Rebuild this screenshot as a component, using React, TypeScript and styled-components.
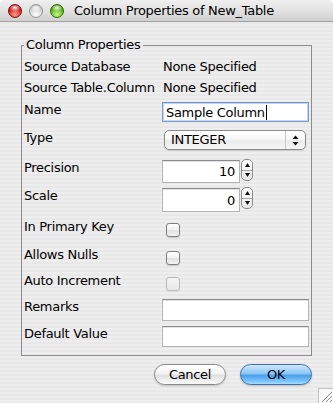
import React from "react";
import styled, { createGlobalStyle } from "styled-components";

const Global = createGlobalStyle`
  html, body { margin: 0; padding: 0; background: #ffffff; }
  body { font-family: "DejaVu Sans", "Liberation Sans", sans-serif; }
  * { box-sizing: border-box; }
`;

const Window = styled.div`
  position: relative;
  width: 333px;
  height: 403px;
  border-radius: 5px 5px 0 0;
  overflow: hidden;
  display: flex;
  flex-direction: column;
  font-size: 13px;
  letter-spacing: -0.3px;
  color: #000;
  background: repeating-linear-gradient(to bottom, #eeeeee 0 2px, #e8e8e8 2px 4px);
`;

const TitleBar = styled.div`
  height: 22px;
  flex: none;
  display: flex;
  align-items: center;
  padding-left: 8px;
  gap: 7px;
  border-bottom: 1px solid #a2a2a2;
  background: linear-gradient(to bottom, #f0f0f0 0%, #e2e2e2 50%, #d0d0d0 100%);
`;

const lightColors: Record<string, [string, string, string]> = {
  close: ["#ff9a90", "#d8302c", "#8a0c08"],
  min: ["#ffffff", "#d6d6d6", "#959595"],
  zoom: ["#c8f58e", "#68b822", "#2c6e06"],
};

const Light = styled.span<{ $kind: "close" | "min" | "zoom" }>`
  width: 14px;
  height: 14px;
  border-radius: 50%;
  flex: none;
  border: 1px solid ${(p) => lightColors[p.$kind][2]};
  background:
    radial-gradient(ellipse 45% 30% at 50% 22%, rgba(255, 255, 255, 0.95) 0%, rgba(255, 255, 255, 0) 100%),
    radial-gradient(
      circle at 50% 80%,
      ${(p) => lightColors[p.$kind][0]} 0%,
      ${(p) => lightColors[p.$kind][1]} 55%,
      ${(p) => lightColors[p.$kind][2]} 100%
    );
`;

const Title = styled.span`
  margin-left: 3px;
  font-size: 13px;
  line-height: 16px;
  white-space: nowrap;
`;

const Content = styled.div`
  flex: 1;
  display: flex;
  flex-direction: column;
  padding: 15px 21px 0 21px;
`;

const Group = styled.fieldset`
  margin: 0;
  padding: 6px 2px 8px 2px;
  border: 1px solid #8c8c8c;
  min-width: 0;
`;

const Legend = styled.legend`
  padding: 0 2px;
  margin: 0;
  line-height: 16px;
  font-size: 13px;
`;

const Row = styled.div<{ $h: number }>`
  display: grid;
  grid-template-columns: 138px 1fr;
  align-items: start;
  height: ${(p) => p.$h}px;
`;

const Label = styled.span`
  line-height: 16px;
  white-space: nowrap;
`;

const Static = styled.span`
  line-height: 16px;
  white-space: nowrap;
  padding-left: 1px;
`;

const TextBox = styled.div<{ $h: number; $focus?: boolean; $w?: number; $right?: boolean }>`
  width: ${(p) => p.$w ?? 147}px;
  height: ${(p) => p.$h}px;
  display: flex;
  align-items: center;
  justify-content: ${(p) => (p.$right ? "flex-end" : "flex-start")};
  padding: ${(p) => (p.$right ? "0 4px 0 3px" : "0 3px")};
  background: #ffffff;
  border: 1px solid ${(p) => (p.$focus ? "#7d9fd0" : "#b4b4b4")};
  border-top-color: ${(p) => (p.$focus ? "#6f93c8" : "#8a8a8a")};
  box-shadow: ${(p) => (p.$focus ? "inset 0 0 0 1px #c3d6f0" : "inset 0 1px 0 #e2e2e2")};
  white-space: nowrap;
`;

const Caret = styled.span`
  display: inline-block;
  width: 1px;
  height: 15px;
  background: #000;
  margin-left: 1px;
`;

const Popup = styled.div`
  margin-left: 2px;
  width: 142px;
  height: 20px;
  display: flex;
  align-items: center;
  border: 1px solid #8a8a8a;
  border-radius: 5px;
  background: linear-gradient(to bottom, #ffffff 0%, #f7f7f7 45%, #ebebeb 55%, #f6f6f6 100%);
  box-shadow: 0 1px 1px rgba(0, 0, 0, 0.12);
`;

const PopupText = styled.span`
  flex: 1;
  padding-left: 6px;
  line-height: 16px;
`;

const PopupArrows = styled.span`
  width: 20px;
  height: 100%;
  display: flex;
  align-items: center;
  justify-content: center;
  border-left: 1px solid #c8c8c8;
`;

const NumberWrap = styled.div`
  display: flex;
  align-items: flex-start;
  gap: 1px;
`;

const Stepper = styled.div`
  margin-top: -1px;
  width: 12px;
  height: 22px;
  display: flex;
  flex-direction: column;
  border: 1px solid #8a8a8a;
  border-radius: 5px;
  overflow: hidden;
  background: linear-gradient(to bottom, #ffffff, #e8e8e8);
`;

const StepHalf = styled.span<{ $top?: boolean }>`
  flex: 1;
  display: flex;
  align-items: center;
  justify-content: center;
  border-bottom: ${(p) => (p.$top ? "1px solid #a8a8a8" : "none")};
`;

const Check = styled.span<{ $disabled?: boolean }>`
  margin: 4px 0 0 4px;
  width: 14px;
  height: 14px;
  border-radius: 3px;
  border: 1px solid ${(p) => (p.$disabled ? "#b9b9b9" : "#808080")};
  background: ${(p) =>
    p.$disabled
      ? "linear-gradient(to bottom, #f4f4f4, #e9e9e9)"
      : "linear-gradient(to bottom, #ffffff 0%, #f1f1f1 50%, #e1e1e1 55%, #f4f4f4 100%)"};
  box-shadow: 0 1px 1px rgba(0, 0, 0, ${(p) => (p.$disabled ? 0.05 : 0.15)});
`;

const Buttons = styled.div`
  display: flex;
  justify-content: flex-end;
  gap: 14px;
  margin-top: 8px;
`;

const Button = styled.button<{ $primary?: boolean }>`
  width: 72px;
  height: 21px;
  padding: 0;
  border-radius: 11px;
  font-family: inherit;
  font-size: 13px;
  letter-spacing: -0.3px;
  line-height: 16px;
  color: #000;
  border: 1px solid ${(p) => (p.$primary ? "#3d6ea8" : "#8a8a8a")};
  background: ${(p) =>
    p.$primary
      ? "linear-gradient(to bottom, #cfe8fd 0%, #8cc6f6 45%, #4aa0ea 55%, #7cc3fb 85%, #a8dcff 100%)"
      : "linear-gradient(to bottom, #ffffff 0%, #f3f3f3 45%, #e0e0e0 55%, #f2f2f2 85%, #fbfbfb 100%)"};
  box-shadow: 0 1px 2px rgba(0, 0, 0, 0.2);
`;

const Grip = styled.svg`
  position: absolute;
  right: 0;
  bottom: 0;
`;

const UpDown = () => (
  <svg width="7" height="11" viewBox="0 0 7 11">
    <path d="M3.5 0.5 L6.5 4 L0.5 4 Z" fill="#111" />
    <path d="M0.5 7 L6.5 7 L3.5 10.5 Z" fill="#111" />
  </svg>
);

const Tri = ({ up }: { up?: boolean }) => (
  <svg width="5" height="4" viewBox="0 0 5 4">
    {up ? <path d="M2.5 0 L5 4 L0 4 Z" fill="#111" /> : <path d="M0 0 L5 0 L2.5 4 Z" fill="#111" />}
  </svg>
);

const NumberField = ({ value, h }: { value: string; h: number }) => (
  <NumberWrap>
    <TextBox $h={h} $w={78} $right>
      {value}
    </TextBox>
    <Stepper>
      <StepHalf $top>
        <Tri up />
      </StepHalf>
      <StepHalf>
        <Tri />
      </StepHalf>
    </Stepper>
  </NumberWrap>
);

export default function App() {
  return (
    <>
      <Global />
      <Window>
        <TitleBar>
          <Light $kind="close" />
          <Light $kind="min" />
          <Light $kind="zoom" />
          <Title>Column Properties of New_Table</Title>
        </TitleBar>
        <Content>
          <Group>
            <Legend>Column Properties</Legend>
            <Row $h={21}>
              <Label>Source Database</Label>
              <Static>None Specified</Static>
            </Row>
            <Row $h={22}>
              <Label>Source Table.Column</Label>
              <Static>None Specified</Static>
            </Row>
            <Row $h={28}>
              <Label>Name</Label>
              <TextBox $h={20} $focus>
                Sample Column
                <Caret />
              </TextBox>
            </Row>
            <Row $h={30}>
              <Label>Type</Label>
              <Popup>
                <PopupText>INTEGER</PopupText>
                <PopupArrows>
                  <UpDown />
                </PopupArrows>
              </Popup>
            </Row>
            <Row $h={28}>
              <Label>Precision</Label>
              <NumberField value="10" h={23} />
            </Row>
            <Row $h={31}>
              <Label>Scale</Label>
              <NumberField value="0" h={24} />
            </Row>
            <Row $h={28}>
              <Label>In Primary Key</Label>
              <Check />
            </Row>
            <Row $h={26}>
              <Label>Allows Nulls</Label>
              <Check />
            </Row>
            <Row $h={26}>
              <Label>Auto Increment</Label>
              <Check $disabled />
            </Row>
            <Row $h={27}>
              <Label>Remarks</Label>
              <TextBox $h={22} />
            </Row>
            <Row $h={21}>
              <Label>Default Value</Label>
              <TextBox $h={21} />
            </Row>
          </Group>
          <Buttons>
            <Button>Cancel</Button>
            <Button $primary>OK</Button>
          </Buttons>
        </Content>
        <Grip width="15" height="15" viewBox="0 0 15 15">
          <rect x="0.5" y="0.5" width="15" height="15" fill="#f8f8f8" stroke="#c4c4c4" />
          <path d="M4 14 L14 4 M8 14 L14 8 M12 14 L14 12" stroke="#8a8a8a" strokeWidth="1" />
          <path d="M5 14 L14 5 M9 14 L14 9" stroke="#ffffff" strokeWidth="1" />
        </Grip>
      </Window>
    </>
  );
}
